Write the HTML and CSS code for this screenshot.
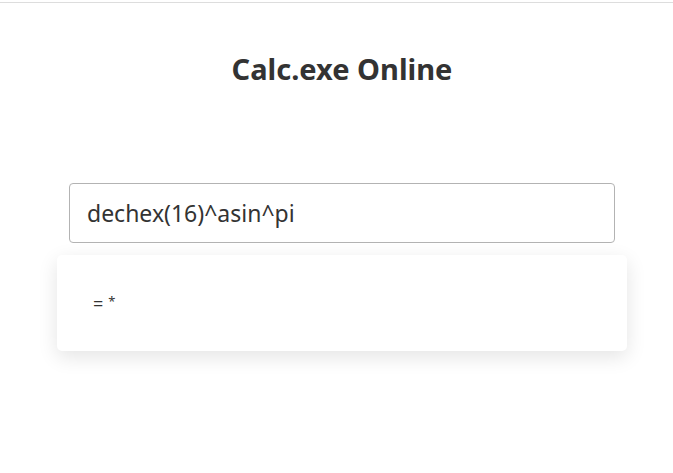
FILE: index.html
```html
<!DOCTYPE html>
<html>
<head>
<meta charset="utf-8">
<link rel="stylesheet" href="styles.css">
</head>
<body>
<div class="topline"></div>
<main class="page">
  <h1 class="title">Calc.exe Online</h1>
  <div class="calc">
    <input class="expr" type="text" value="dechex(16)^asin^pi">
    <div class="result">
      <span class="eq">=</span> <span class="star">*</span>
    </div>
  </div>
</main>
</body>
</html>
```
FILE: styles.css
```css
html, body {
  margin: 0;
  padding: 0;
  background: #fff;
  font-family: "Noto Sans", "Open Sans", sans-serif;
  color: #333;
}
.topline {
  margin-top: 2px;
  height: 1px;
  background: #ddd;
}
.page {
  display: flex;
  flex-direction: column;
  align-items: center;
  padding: 0 0 60px 11px;
}
.title {
  margin: 46px 0 0 0;
  font-size: 29px;
  font-weight: 700;
  line-height: 40px;
  color: #333;
}
.calc {
  margin-top: 94px;
  width: 570px;
  display: flex;
  flex-direction: column;
  align-items: center;
}
.expr {
  box-sizing: border-box;
  width: 546px;
  height: 60px;
  border: 1px solid #b3b3b3;
  border-radius: 4px;
  padding: 0 17px;
  font-family: inherit;
  font-size: 23px;
  color: #333;
  outline: none;
}
.result {
  box-sizing: border-box;
  margin-top: 12px;
  width: 570px;
  height: 96px;
  border-radius: 5px;
  background: #fff;
  box-shadow: 0 6px 20px rgba(0,0,0,0.11);
  padding: 36px 0 0 36px;
  font-size: 15px;
  color: #333;
}
.eq {
  font-size: 18px;
  margin-right: 1px;
}
.star {
  font-size: 13px;
  position: relative;
  top: -4px;
}
```
